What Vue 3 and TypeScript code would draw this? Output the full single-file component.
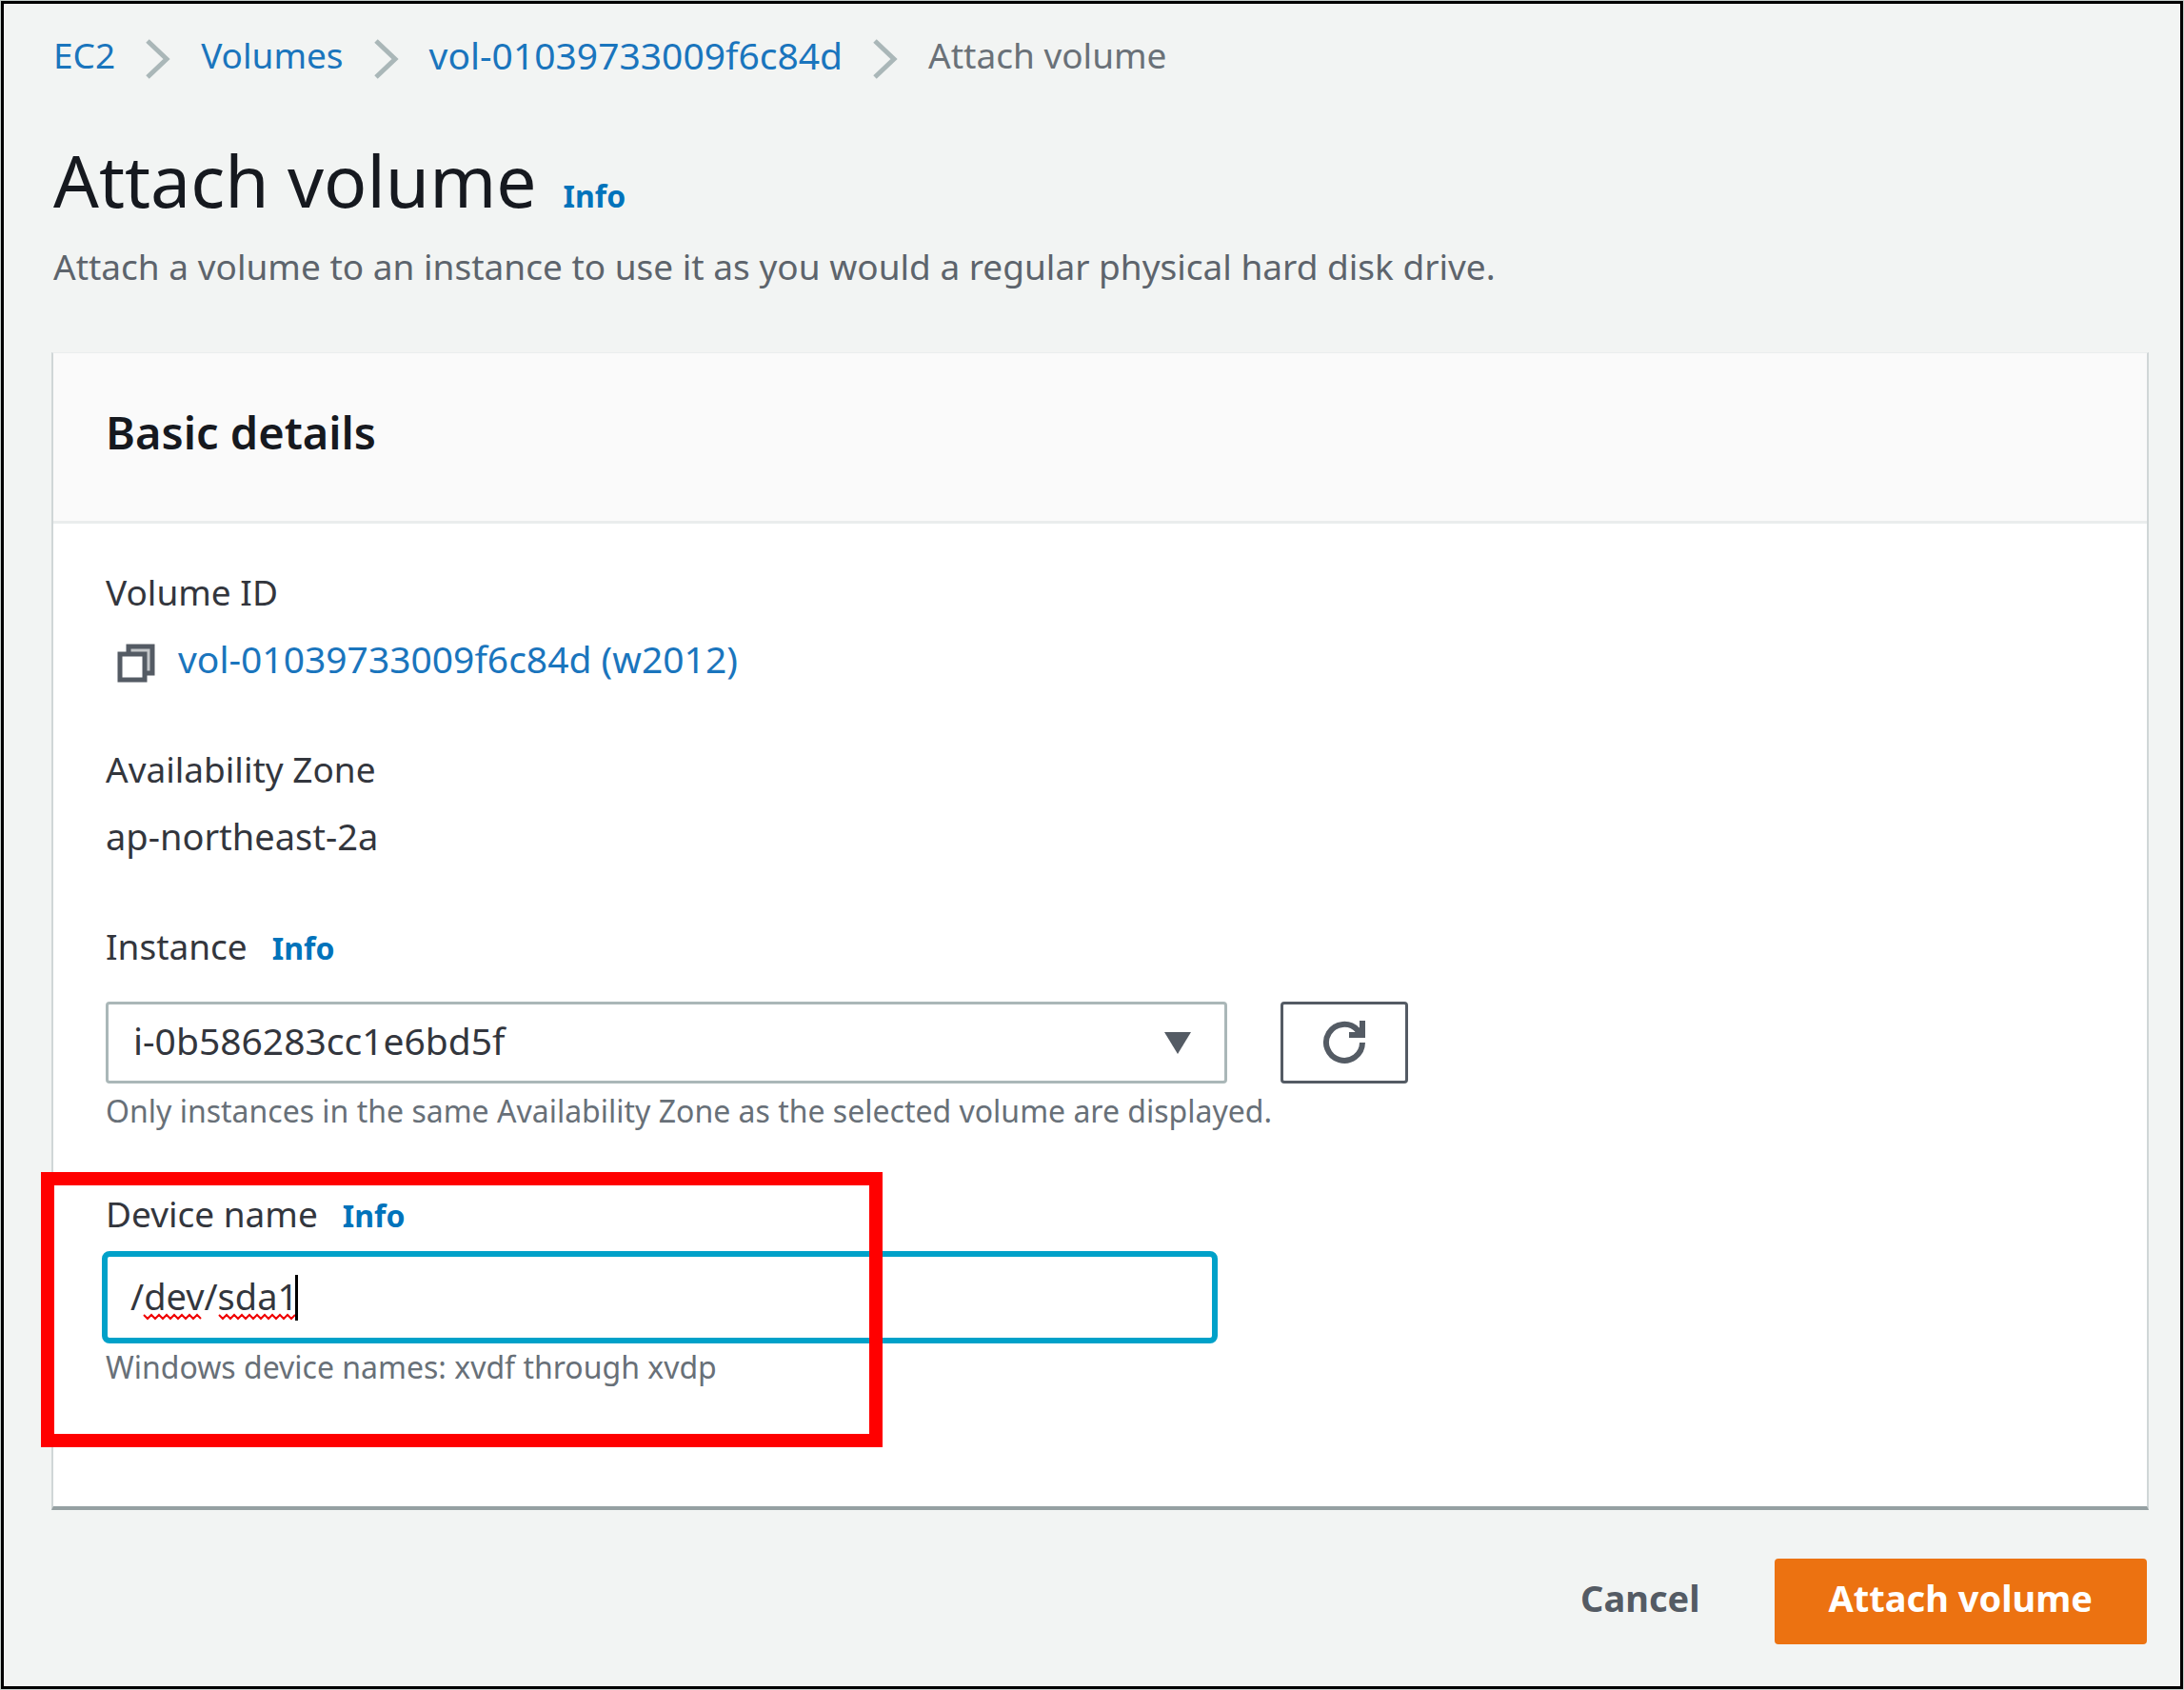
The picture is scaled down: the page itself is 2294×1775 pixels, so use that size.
<script setup lang="ts">
import { ref } from 'vue'

interface Crumb {
  text: string
  isId?: boolean
}

const crumbs: Crumb[] = [
  { text: 'EC2' },
  { text: 'Volumes' },
  { text: 'vol-01039733009f6c84d', isId: true },
]

const instances = ['i-0b586283cc1e6bd5f']
const instance = ref(instances[0])
const deviceName = ref('/dev/sda1')

// Zigzag under a misspelt word, from x = start to x = end
const squiggle = (start: number, end: number): string => {
  let d = `M${start} 2`
  for (let x = start + 4, down = true; x <= end; x += 4, down = !down) d += `L${x} ${down ? 6 : 2}`
  return d
}
</script>

<template>
  <div class="frame">
    <main class="page">
      <nav class="crumbs" aria-label="Breadcrumb">
        <template v-for="crumb in crumbs" :key="crumb.text">
          <a href="#" :class="{ id: crumb.isId }">{{ crumb.text }}</a>
          <svg class="chevron" viewBox="0 0 26 42" aria-hidden="true"><path d="M2 2L22 21L2 40" /></svg>
        </template>
        <span>Attach volume</span>
      </nav>

      <header class="title">
        <div class="title-row">
          <h1>Attach volume</h1>
          <a href="#" class="info">Info</a>
        </div>
        <p>Attach a volume to an instance to use it as you would a regular physical hard disk drive.</p>
      </header>

      <section class="card">
        <div class="card-head"><h2>Basic details</h2></div>

        <div class="card-body">
          <dl class="facts">
            <div class="fact">
              <dt>Volume ID</dt>
              <dd class="volume">
                <button type="button" class="copy" aria-label="Copy volume ID">
                  <svg viewBox="0 0 40 42" aria-hidden="true">
                    <path class="back" d="M12 12V4H37V32H29" />
                    <rect x="3" y="12" width="26" height="27" />
                  </svg>
                </button>
                <a href="#" class="id">vol-01039733009f6c84d (w2012)</a>
              </dd>
            </div>
            <div class="fact">
              <dt>Availability Zone</dt>
              <dd>ap-northeast-2a</dd>
            </div>
          </dl>

          <div class="field instance">
            <div class="label-row">
              <label for="instance">Instance</label>
              <a href="#" class="info">Info</a>
            </div>
            <div class="instance-row">
              <div class="select">
                <select id="instance" v-model="instance">
                  <option v-for="id in instances" :key="id" :value="id">{{ id }}</option>
                </select>
                <svg class="caret-down" viewBox="0 0 30 25" aria-hidden="true"><path d="M1 1H29L15 24Z" /></svg>
              </div>
              <button type="button" class="refresh" aria-label="Refresh instances">
                <svg viewBox="0 0 46 46" aria-hidden="true">
                  <path class="arc" d="M42 23A19 19 0 1 1 37 10L41 14" />
                  <path class="head" d="M39 0H45V18H28V12H34L39 7Z" />
                </svg>
              </button>
            </div>
            <p class="hint">Only instances in the same Availability Zone as the selected volume are displayed.</p>
          </div>

          <div class="field device">
            <div class="label-row">
              <label for="device">Device name</label>
              <a href="#" class="info">Info</a>
            </div>
            <div class="input">
              <input id="device" v-model="deviceName" type="text" spellcheck="false" autocomplete="off" />
              <svg class="spelling" viewBox="0 0 168 8" aria-hidden="true">
                <path :d="squiggle(1, 64)" /><path :d="squiggle(80, 160)" />
              </svg>
              <span class="text-caret" aria-hidden="true"></span>
            </div>
            <p class="hint">Windows device names: xvdf through xvdp</p>
            <div class="highlight" aria-hidden="true"></div>
          </div>
        </div>
      </section>

      <footer class="actions">
        <button type="button" class="cancel">Cancel</button>
        <button type="button" class="primary">Attach volume</button>
      </footer>
    </main>
  </div>
</template>

<style>
body {
  margin: 0;
  background: #f2f4f3;
}
</style>

<style scoped>
* {
  box-sizing: border-box;
}

.frame {
  min-height: 100vh;
  display: flex;
  padding: 1px;
  background: #c6cecb;
  font-family: 'Noto Sans', 'Open Sans', sans-serif;
  font-size: 38px;
  line-height: 50px;
  color: #33363d;
}

.page {
  flex: 1;
  min-width: 0;
  padding: 29px 33px 40px 50px;
  border: 3px solid #000;
  background: #f2f4f3;
}

h1,
h2,
p,
dl,
dd {
  margin: 0;
}

button,
input,
select {
  font: inherit;
}

button {
  padding: 0;
  border: 0;
  background: none;
  cursor: pointer;
}

a {
  color: #1a75bd;
  text-decoration: none;
}

svg {
  display: block;
}

.id {
  font-size: 39px;
}

.info {
  font-size: 32px;
  font-weight: 700;
  color: #0073bb;
}

.crumbs {
  display: flex;
  flex-wrap: wrap;
  align-items: flex-start;
  column-gap: 32px;
  padding-left: 2px;
  font-size: 37px;
  color: #6a7178;
}

.chevron {
  width: 26px;
  height: 42px;
  margin-top: 8px;
  fill: none;
  stroke: #aab7b8;
  stroke-width: 5;
}

.title {
  margin-top: 61px;
  padding-left: 2px;
}

.title-row {
  display: flex;
  align-items: baseline;
  gap: 28px;
}

h1 {
  font-size: 75px;
  font-weight: 400;
  line-height: 90px;
  color: #16191f;
}

.title p {
  margin-top: 21px;
  font-size: 37px;
  color: #5d646c;
}

.card {
  margin-top: 65px;
  border: 2px solid #d0d6d7;
  border-top: 1px solid #eaeded;
  border-bottom: 4px solid #95a0a2;
  background: #fff;
}

.card-head {
  padding: 53px 55px 63px;
  border-bottom: 3px solid #eaeded;
  background: #fafafa;
}

h2 {
  font-size: 47px;
  font-weight: 600;
  line-height: 60px;
  color: #16191f;
}

.card-body {
  padding: 47px 55px 124px;
}

.facts {
  display: grid;
  gap: 66px;
}

.fact {
  display: grid;
  gap: 20px;
}

dt,
label {
  font-size: 37px;
}

.volume {
  display: flex;
  align-items: center;
  gap: 24px;
}

.copy {
  margin: 8px 0 0 12px;
}

.copy svg {
  width: 40px;
  height: 42px;
  fill: #fff;
  stroke: #545b64;
  stroke-width: 5;
}

.copy .back {
  fill: #c3c6c9;
}

.instance {
  margin-top: 66px;
}

.label-row {
  display: flex;
  align-items: baseline;
  gap: 26px;
}

.instance-row {
  display: flex;
  gap: 56px;
  margin-top: 31px;
}

.select {
  position: relative;
  flex: 0 1 1178px;
}

select {
  width: 100%;
  height: 86px;
  padding: 0 80px 4px 26px;
  border: 3px solid #aab7b8;
  border-radius: 4px;
  background: #fff;
  color: inherit;
  font-size: 39px;
  appearance: none;
}

.caret-down {
  position: absolute;
  right: 37px;
  top: 31px;
  width: 30px;
  height: 25px;
  fill: #545b64;
  pointer-events: none;
}

.refresh {
  display: grid;
  place-items: center;
  flex: none;
  width: 134px;
  height: 86px;
  border: 3px solid #545b64;
  border-radius: 4px;
  background: #fff;
}

.refresh svg {
  width: 46px;
  height: 46px;
}

.refresh .arc {
  fill: none;
  stroke: #545b64;
  stroke-width: 6;
}

.refresh .head {
  fill: #545b64;
}

.hint {
  font-size: 32px;
  line-height: 44px;
  color: #687078;
}

.instance .hint {
  margin-top: 7px;
}

.device {
  position: relative;
  margin-top: 61px;
}

.input {
  position: relative;
  max-width: 1172px;
  margin: 12px 0 3px -4px;
}

input {
  display: block;
  width: 100%;
  height: 97px;
  padding: 0 24px 4px;
  border: 6px solid #00a1c9;
  border-radius: 8px;
  outline: none;
  background: #fff;
  color: inherit;
  caret-color: transparent;
}

.spelling {
  position: absolute;
  left: 43px;
  top: 65px;
  width: 168px;
  height: 8px;
  fill: none;
  stroke: #f00000;
  stroke-width: 2;
  pointer-events: none;
}

.text-caret {
  position: absolute;
  left: 203px;
  top: 25px;
  width: 3px;
  height: 48px;
  background: #000;
  pointer-events: none;
}

/* Callout drawn round the device name field */
.highlight {
  position: absolute;
  left: -68px;
  top: -19px;
  width: 884px;
  height: 289px;
  border: 14px solid #f00;
  pointer-events: none;
}

.actions {
  display: flex;
  justify-content: flex-end;
  gap: 40px;
  margin: 51px 2px 0 0;
}

.actions button {
  height: 90px;
  padding: 0 38px 8px;
  font-weight: 700;
}

.cancel {
  color: #545b64;
}

.actions .primary {
  padding: 0 57px 8px;
  border-radius: 4px;
  background: #ec7211;
  color: #fff;
}
</style>
